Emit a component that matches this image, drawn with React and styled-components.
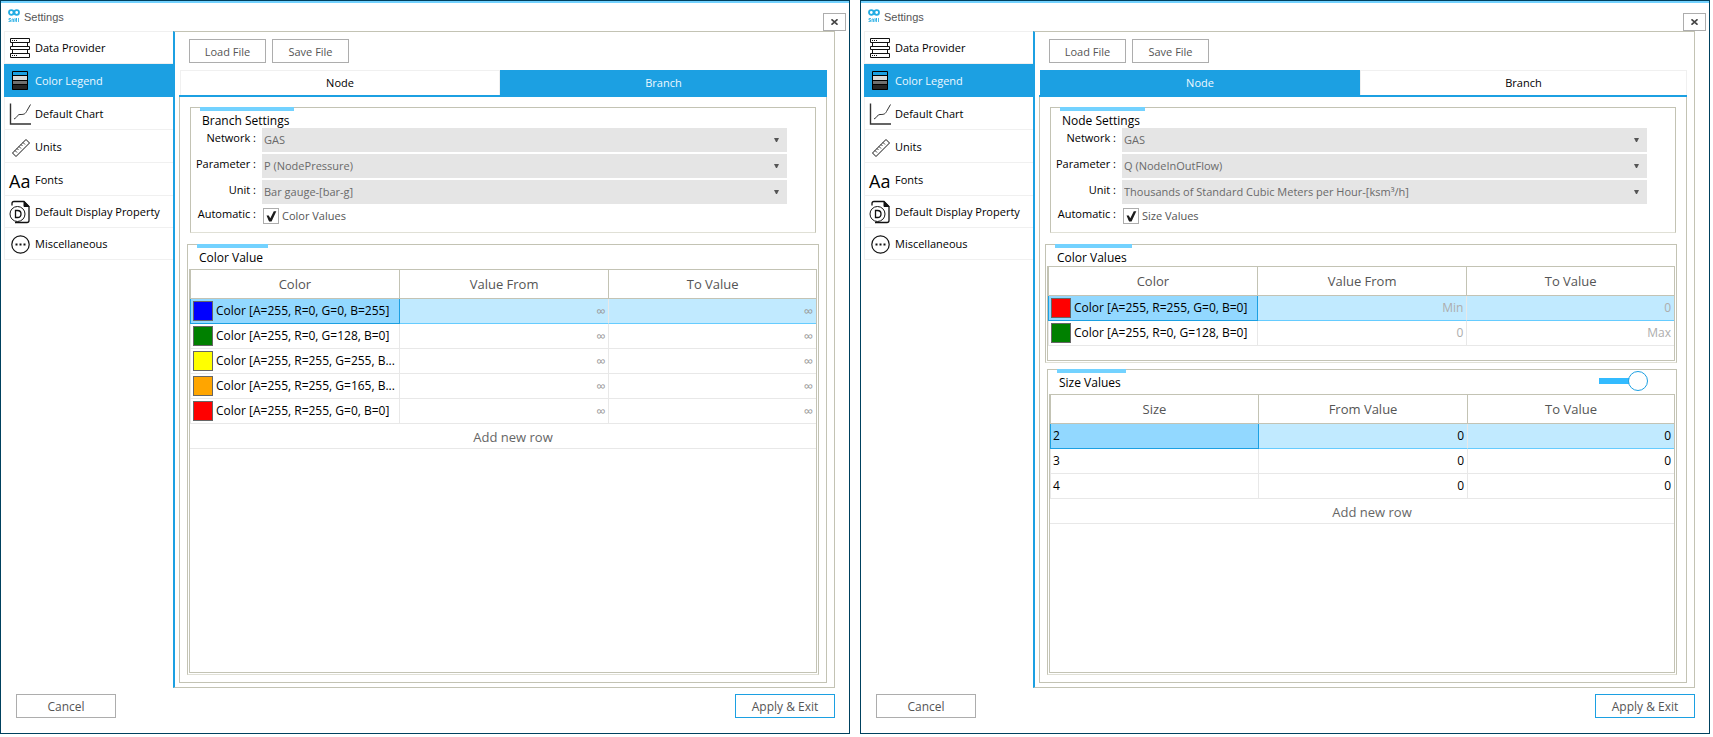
import React, { useId } from "react";
import styled, { createGlobalStyle, css } from "styled-components";

const c = {
  frame: "#00415f",
  accent: "#1ca0e2",
  light: "#73d2ff",
  line: "#c3c3b4",
  faint: "#e0e0d6",
  cell: "#e8e8e8",
  text: "#555555",
  button: "#adadad",
};

const GlobalStyle = createGlobalStyle`
  *, *::before, *::after { box-sizing: border-box; }
  body { margin: 0; background: #fff; color: #000; font: 11px/16px "Open Sans", "Noto Sans", sans-serif; }
  button, select, input { font: inherit; color: inherit; margin: 0; }
  button { padding: 0; cursor: pointer; }
`;

const Page = styled.main`
  display: grid;
  grid-template-columns: 1fr 1fr;
  gap: 10px;
  min-height: 100vh;
  padding: 0 3px 3px 0;
`;

const Window = styled.section`
  display: flex;
  flex-direction: column;
  min-width: 0;
  border: 1px solid ${c.frame};
  background: #fff;
`;

const TitleBar = styled.header`
  display: flex;
  align-items: flex-end;
  gap: 4px;
  height: 30px;
  padding: 0 3px 0 7px;
  border-top: 2px solid ${c.light};
`;

const Title = styled.h1`
  flex: 1;
  margin: 0 0 6px;
  color: ${c.text};
  font: 11px/16px "Liberation Sans", sans-serif;
`;

const Logo = styled.svg`
  width: 12px;
  height: 14px;
  margin-bottom: 8px;
`;

const CloseButton = styled.button`
  display: grid;
  place-items: center;
  width: 23px;
  height: 18px;
  border: 1px solid ${c.button};
  background: #fff;
`;

const Body = styled.div`
  display: grid;
  grid-template-columns: 169px 1fr;
  flex: 1;
  padding: 0 14px 0 3px;
`;

const Nav = styled.nav`
  display: flex;
  flex-direction: column;
`;

const NavItem = styled.button`
  display: flex;
  align-items: center;
  gap: 4px;
  height: 33px;
  padding: 0 0 0 4px;
  border: 0 solid #f0f0f0;
  border-width: 0 0 1px 1px;
  background: #fff;
  text-align: left;
  white-space: nowrap;

  &:first-child { border-top-width: 1px; }
  &:nth-last-child(-n + 2) { height: 32px; }

  ${(p) => p.$active && css`
    border-color: ${c.accent};
    background: ${c.accent};
    color: #eef8ff;
  `}
`;

const NavLabel = styled.span`
  padding-top: 1px;
`;

const NavIcon = styled.svg`
  width: 22px;
  height: 24px;
  fill: none;
  stroke: #111;
`;

const FontGlyph = styled.span`
  width: 22px;
  padding-top: 3px;
  font-size: 18px;
  font-weight: 500;
  line-height: 24px;
`;

const Content = styled.div`
  display: flex;
  flex-direction: column;
  min-width: 0;
  padding: 7px 7px 4px 4px;
  border: 1px solid ${c.line};
  border-left: 2px solid ${c.accent};
`;

const Toolbar = styled.div`
  display: flex;
  gap: 6px;
  padding: 0 0 7px 10px;
`;

const Button = styled.button`
  width: ${(p) => (p.$wide ? 100 : 77)}px;
  height: 24px;
  padding-top: 2px;
  border: 1px solid ${(p) => (p.$primary ? c.accent : c.button)};
  background: #fff;
  color: ${c.text};
  font-size: ${(p) => (p.$wide ? 12 : 11)}px;
`;

const Tabs = styled.div`
  display: grid;
  grid-template-columns: 320fr 327fr;
  padding-left: 1px;
  border-bottom: 2px solid ${c.accent};
`;

const Tab = styled.button`
  height: 25px;
  border: 1px solid #f0f0f0;
  border-bottom: 0;
  background: #fff;

  ${(p) => p.$active && css`
    border-color: ${c.accent};
    background: ${c.accent};
    color: #eef8ff;
  `}
`;

const TabPanel = styled.div`
  display: flex;
  flex: 1;
  flex-direction: column;
  padding: 10px 0 7px;
  border: 1px solid ${c.line};
  border-top: 0;
`;

const Group = styled.section`
  display: flex;
  flex-direction: column;
  flex: ${(p) => (p.$grow ? 1 : "none")};
  margin: ${(p) => p.$margin};
  border: 1px solid ${c.line};
  border-bottom-color: ${c.faint};
`;

const GroupHead = styled.div`
  display: flex;
  justify-content: space-between;
  align-items: flex-start;
  height: ${(p) => p.$height}px;
  padding: 0 28px 0 9px;
`;

const GroupTitle = styled.h2`
  margin: -1px 0 0;
  padding: 0 5px 0 2px;
  border-top: 4px solid ${c.light};
  font-size: 12px;
  font-weight: 400;
  line-height: 20px;
`;

const Fields = styled.div`
  display: grid;
  gap: 2px;
  padding: 0 28px 6px 0;
`;

const Field = styled.div`
  display: grid;
  grid-template-columns: 65px 1fr;
  gap: 6px;
  height: ${(p) => (p.$short ? 20 : 24)}px;
`;

const FieldLabel = styled.label`
  align-self: center;
  padding-bottom: 4px;
  text-align: right;
  white-space: nowrap;
`;

const SelectBox = styled.div`
  position: relative;
`;

const Select = styled.select`
  width: 100%;
  height: 24px;
  padding: 0 20px 0 2px;
  border: 0;
  border-radius: 0;
  background: #e5e5e5;
  color: #6a6a6a;
  appearance: none;
`;

const Arrow = styled.svg`
  position: absolute;
  top: 10px;
  right: 8px;
  width: 5px;
  height: 4px;
  fill: ${c.text};
  pointer-events: none;
`;

const CheckRow = styled.label`
  display: flex;
  align-items: center;
  gap: 3px;
  padding-left: 1px;
  color: ${c.text};
`;

const CheckBox = styled.input`
  width: 16px;
  height: 16px;
  border: 1px solid ${c.button};
  background: #fff;
  appearance: none;

  &:checked::before {
    content: "";
    display: block;
    width: 14px;
    height: 14px;
    background: #1c1c1c;
    clip-path: polygon(18% 46%, 34% 46%, 45% 66%, 70% 16%, 88% 16%, 54% 90%, 36% 90%);
  }
`;

const Switch = styled.input`
  display: flex;
  align-items: center;
  justify-content: flex-end;
  width: 49px;
  height: 20px;
  margin: 1px 0 0;
  background: linear-gradient(#33bbff, #33bbff) left center / 32px 6px no-repeat;
  border-radius: 3px;
  appearance: none;

  &::before {
    content: "";
    width: 20px;
    height: 20px;
    border: 1px solid ${c.accent};
    border-radius: 50%;
    background: #fff;
  }
`;

const Grid = styled.div`
  flex: 1;
  margin: 0 1px 1px;
  padding-bottom: ${(p) => (p.$roomy ? 14 : 0)}px;
  border: 1px solid ${c.line};
`;

const Table = styled.table`
  width: 100%;
  border-spacing: 0;
  table-layout: fixed;
  font-size: 12px;
`;

const HeadCell = styled.th`
  width: 33.5%;
  height: 29px;
  padding: 0;
  border: 0 solid ${c.line};
  border-width: 0 1px 1px 0;
  color: ${c.text};
  font-size: 13px;
  font-weight: 400;

  &:first-child { border-left-width: 1px; }
  &:last-child { width: auto; border-right-width: 0; }
`;

const Cell = styled.td`
  height: 25px;
  padding: 0 3px 0 2px;
  border: 0 solid ${c.cell};
  border-width: 0 1px 1px 0;
  color: ${(p) => (p.$muted ? "#adadad" : "#000")};
  text-align: right;

  &:first-child { border-left-width: 1px; text-align: left; }
  &:last-child { border-right-width: 0; }
`;

const Infinity = styled.span`
  color: #999;
  font-size: 13px;
`;

const Row = styled.tr`
  ${(p) => p.$selected && css`
    & > td { background: #c1eaff; border-bottom-color: #66ccff; }
    & > td:first-child { background: #92d8ff; border-color: ${c.accent}; }
  `}
`;

const Swatched = styled.div`
  display: flex;
  align-items: center;
  gap: 3px;
  white-space: nowrap;
`;

const Swatch = styled.span`
  flex: none;
  width: 20px;
  height: 20px;
  border: 1px solid #666;
  background: ${(p) => p.$color};
`;

const AddCell = styled.td`
  height: 25px;
  padding: 0;
  border-bottom: 1px solid ${c.cell};
`;

const AddButton = styled.button`
  display: block;
  width: 100%;
  height: 24px;
  padding: 1px 0 0 20px;
  border: 0;
  background: none;
  color: #666;
  font-size: 13px;
`;

const Footer = styled.footer`
  display: flex;
  justify-content: space-between;
  padding: 6px 14px 15px 15px;
`;

const navItems = [
  {
    label: "Data Provider",
    icon: (
      <NavIcon viewBox="0 0 22 24">
        <path d="M1.5 2.5h19v4h-19zM1.5 10.5h19v3h-19zM1.5 17.5h19v4h-19zM3.5 6.5h15v4h-15zM3.5 13.5h15v4h-15z" />
        <path d="M3 4.5h1m1 0h1m1 0h1M3 19.5h1m1 0h1m1 0h1" />
      </NavIcon>
    ),
  },
  {
    label: "Color Legend",
    active: true,
    icon: (
      <NavIcon viewBox="0 0 22 24">
        <path d="M3.5 8h15v5h-15z" fill="#d8d8d8" stroke="none" />
        <path d="M3.5 13h15v4h-15z" fill="#707070" stroke="none" />
        <path d="M3.5 17h15v5h-15z" fill="#262626" stroke="none" />
        <path d="M3.5 3.5h15v18h-15zM3.5 7.5h15M3.5 12.5h15M3.5 16.5h15" stroke="#000" />
      </NavIcon>
    ),
  },
  {
    label: "Default Chart",
    icon: (
      <NavIcon viewBox="0 0 22 24">
        <path d="M1.5 2.5v20.500h21" strokeWidth="1.400" stroke="#333" />
        <path d="M5 18c4-2 3-4.500 6-4.500s5 0 6.500-3L21.500 3.500" stroke="#333" />
      </NavIcon>
    ),
  },
  {
    label: "Units",
    icon: (
      <NavIcon viewBox="0 0 22 24">
        <path d="M3.500 19 17 5.500 20.500 9 7 22.500z" />
        <path d="m6 16.500 2 2M8 14.500l1.500 1.500M10 12.500l2 2M12 10.500l1.500 1.500M14 8.500l2 2" strokeWidth=".8" />
      </NavIcon>
    ),
  },
  { label: "Fonts", icon: <FontGlyph aria-hidden="true">Aa</FontGlyph> },
  {
    label: "Default Display Property",
    icon: (
      <NavIcon viewBox="0 0 22 24">
        <path d="M3 5.500V3.500q0-2 2-2h10l5 5v14q0 2-2 2H6" strokeWidth="1.300" />
        <path d="M15 1.500v5h5z" fill="#111" />
        <circle cx="8.500" cy="14" r="7.500" fill="#fff" />
        <path d="M6.500 10.500v7h2q3.500 0 3.500-3.500t-3.500-3.500z" strokeWidth="1.300" />
      </NavIcon>
    ),
  },
  {
    label: "Miscellaneous",
    icon: (
      <NavIcon viewBox="0 0 22 24">
        <circle cx="11.500" cy="12.500" r="8.700" strokeWidth="1.200" />
        <path d="M6.500 12.500h2m2 0h2m2 0h2" strokeWidth="2" />
      </NavIcon>
    ),
  },
];

function SelectField({ label, value }) {
  const id = useId();
  return (
    <Field>
      <FieldLabel htmlFor={id}>{label} :</FieldLabel>
      <SelectBox>
        <Select id={id} defaultValue={value}>
          <option>{value}</option>
        </Select>
        <Arrow viewBox="0 0 5 4"><path d="M0 0h5L3 4H2z" /></Arrow>
      </SelectBox>
    </Field>
  );
}

function CheckField({ text }) {
  const id = useId();
  return (
    <Field $short>
      <FieldLabel htmlFor={id}>Automatic :</FieldLabel>
      <CheckRow>
        <CheckBox id={id} type="checkbox" defaultChecked />
        {text}
      </CheckRow>
    </Field>
  );
}

function Value({ value }) {
  return value === "∞" ? <Infinity>∞</Infinity> : value;
}

function ValueTable({ columns, rows, muted, addRow, roomy }) {
  return (
    <Grid $roomy={roomy}>
      <Table>
        <thead>
          <tr>{columns.map((name) => <HeadCell key={name} scope="col">{name}</HeadCell>)}</tr>
        </thead>
        <tbody>
          {rows.map(([first, from, to, color], i) => (
            <Row key={first} $selected={i === 0}>
              <Cell>
                {color ? <Swatched><Swatch $color={color} />{first}</Swatched> : first}
              </Cell>
              <Cell $muted={muted}><Value value={from} /></Cell>
              <Cell $muted={muted}><Value value={to} /></Cell>
            </Row>
          ))}
          {addRow && (
            <tr><AddCell colSpan={3}><AddButton type="button">Add new row</AddButton></AddCell></tr>
          )}
        </tbody>
      </Table>
    </Grid>
  );
}

function SettingsGroup({ title, parameter, unit, check }) {
  return (
    <Group $margin="0 10px 11px">
      <GroupHead $height={20}><GroupTitle>{title}</GroupTitle></GroupHead>
      <Fields>
        <SelectField label="Network" value="GAS" />
        <SelectField label="Parameter" value={parameter} />
        <SelectField label="Unit" value={unit} />
        <CheckField text={check} />
      </Fields>
    </Group>
  );
}

function SettingsWindow({ activeTab, children }) {
  return (
    <Window>
      <TitleBar>
        <Logo viewBox="0 0 12 14" fill="none" stroke="#22ace3">
          <circle cx="3.300" cy="3.500" r="2.300" strokeWidth="1.800" />
          <circle cx="8.700" cy="3.500" r="2.300" strokeWidth="1.800" />
          <path d="M3 9.500H1v1.500h1.500v1.500H.5M4 13v-3h1.500v3M7 9v4m0-2h1.500V9v4M10.500 9v4" strokeWidth=".8" />
        </Logo>
        <Title>Settings</Title>
        <CloseButton type="button" aria-label="Close">
          <svg width="7" height="6" viewBox="0 0 7 6" stroke="#444" strokeWidth="1.600"><path d="M.5.300l6 5.400m0-5.400-6 5.400" /></svg>
        </CloseButton>
      </TitleBar>
      <Body>
        <Nav>
          {navItems.map(({ label, icon, active }) => (
            <NavItem key={label} type="button" $active={active}>{icon}<NavLabel>{label}</NavLabel></NavItem>
          ))}
        </Nav>
        <Content>
          <Toolbar>
            <Button type="button">Load File</Button>
            <Button type="button">Save File</Button>
          </Toolbar>
          <Tabs role="tablist">
            {["Node", "Branch"].map((name) => (
              <Tab key={name} type="button" role="tab" aria-selected={name === activeTab} $active={name === activeTab}>{name}</Tab>
            ))}
          </Tabs>
          <TabPanel role="tabpanel">{children}</TabPanel>
        </Content>
      </Body>
      <Footer>
        <Button type="button" $wide>Cancel</Button>
        <Button type="button" $wide $primary>Apply &amp; Exit</Button>
      </Footer>
    </Window>
  );
}

const branchColors = [
  ["Color [A=255, R=0, G=0, B=255]", "∞", "∞", "#0000ff"],
  ["Color [A=255, R=0, G=128, B=0]", "∞", "∞", "#008000"],
  ["Color [A=255, R=255, G=255, B...", "∞", "∞", "#ffff00"],
  ["Color [A=255, R=255, G=165, B...", "∞", "∞", "#ffa500"],
  ["Color [A=255, R=255, G=0, B=0]", "∞", "∞", "#ff0000"],
];

const nodeColors = [
  ["Color [A=255, R=255, G=0, B=0]", "Min", "0", "#ff0000"],
  ["Color [A=255, R=0, G=128, B=0]", "0", "Max", "#008000"],
];

const nodeSizes = [["2", "0", "0"], ["3", "0", "0"], ["4", "0", "0"]];

export default function App() {
  return (
    <>
      <GlobalStyle />
      <Page>
        <SettingsWindow activeTab="Branch">
          <SettingsGroup title="Branch Settings" parameter="P (NodePressure)" unit="Bar gauge-[bar-g]" check="Color Values" />
          <Group $grow $margin="0 7px">
            <GroupHead $height={24}><GroupTitle>Color Value</GroupTitle></GroupHead>
            <ValueTable columns={["Color", "Value From", "To Value"]} rows={branchColors} muted addRow />
          </Group>
        </SettingsWindow>
        <SettingsWindow activeTab="Node">
          <SettingsGroup
            title="Node Settings"
            parameter="Q (NodeInOutFlow)"
            unit="Thousands of Standard Cubic Meters per Hour-[ksm³/h]"
            check="Size Values"
          />
          <Group $margin="0 9px 6px 5px">
            <GroupHead $height={21}><GroupTitle>Color Values</GroupTitle></GroupHead>
            <ValueTable columns={["Color", "Value From", "To Value"]} rows={nodeColors} muted roomy />
          </Group>
          <Group $grow $margin="0 9px 0 7px">
            <GroupHead $height={24}>
              <GroupTitle>Size Values</GroupTitle>
              <Switch type="checkbox" role="switch" aria-label="Size Values" defaultChecked />
            </GroupHead>
            <ValueTable columns={["Size", "From Value", "To Value"]} rows={nodeSizes} addRow />
          </Group>
        </SettingsWindow>
      </Page>
    </>
  );
}
